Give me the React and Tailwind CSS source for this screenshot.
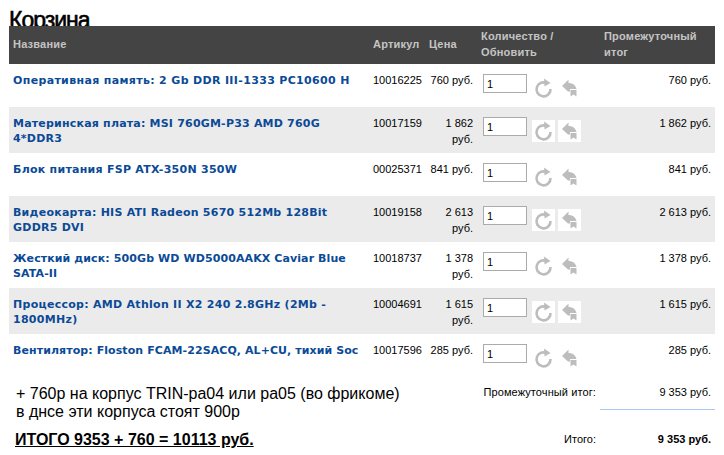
const items = [
  { name: "Оперативная память: 2 Gb DDR III-1333 PC10600 H", sku: "10016225", price: "760 руб.", h: "h-[43px]", track: "tracking-[0.34px]" },
  { name: "Материнская плата: MSI 760GM-P33 AMD 760G 4*DDR3", sku: "10017159", price: "1 862 руб.", h: "h-[46px]", track: "tracking-[0.2px]" },
  { name: "Блок питания FSP ATX-350N 350W", sku: "00025371", price: "841 руб.", h: "h-[43px]", track: "tracking-[0.26px]" },
  { name: "Видеокарта: HIS ATI Radeon 5670 512Mb 128Bit GDDR5 DVI", sku: "10019158", price: "2 613 руб.", h: "h-[46px]", track: "tracking-[0.24px]" },
  { name: "Жесткий диск: 500Gb WD WD5000AAKX Caviar Blue SATA-II", sku: "10018737", price: "1 378 руб.", h: "h-[46px]", track: "tracking-[0.1px]" },
  { name: "Процессор: AMD Athlon II X2 240 2.8GHz (2Mb - 1800MHz)", sku: "10004691", price: "1 615 руб.", h: "h-[46px]", track: "tracking-[0.28px]" },
  { name: "Вентилятор: Floston FCAM-22SACQ, AL+CU, тихий Soc", sku: "10017596", price: "285 руб.", h: "h-[43px]", track: "tracking-[0.08px]" },
];

function RefreshIcon() {
  return (
    <svg width="23" height="22" viewBox="0 0 23 22" className="block">
      <path d="M15 6.300A7 7 0 1 0 18.500 12" fill="none" stroke="#bdbdbd" strokeWidth="2.600" />
      <path d="M12 1.500l6.500 4.500-6 3.500z" fill="#bdbdbd" />
    </svg>
  );
}

function RemoveIcon() {
  return (
    <svg width="23" height="22" viewBox="0 0 23 22" className="block">
      <path d="M4 9l6.500-6.500v3.500c4 0 7 2 8 6h-6.500v2.500h-2z" fill="#bdbdbd" />
      <path d="M12.500 13h6v6.500l-3-2-3 2z" fill="#bdbdbd" />
    </svg>
  );
}

function Row({ item, striped }) {
  const btn = striped ? "bg-white" : "";
  return (
    <tr className={`${item.h} align-top ${striped ? "bg-[#ebebeb]" : "bg-white"}`}>
      <td className="pl-1 pr-1 pt-[9px]">
        <a className={`block text-[11px] leading-[15px] font-bold text-[#0b4a96] [font-family:'DejaVu_Sans',sans-serif] ${item.track}`}>
          {item.name}
        </a>
      </td>
      <td className="pl-1 pt-[8px] leading-[16px]">{item.sku}</td>
      <td className="pr-1 pt-[8px] leading-[16px] text-right">{item.price}</td>
      <td className="pl-1 pt-[10px]">
        <div className="flex items-start">
          <input
            defaultValue="1"
            className="w-[44px] h-[19px] ml-[2px] pl-[3px] bg-white border border-[#ababab] text-[11px] text-black outline-none"
          />
          <span className={`w-[23px] h-[22px] ml-[5px] mt-[3px] ${btn}`}><RefreshIcon /></span>
          <span className={`w-[23px] h-[22px] ml-[3px] mt-[3px] ${btn}`}><RemoveIcon /></span>
        </div>
      </td>
      <td className="pr-1 pt-[8px] leading-[16px] text-right">{item.price}</td>
    </tr>
  );
}

export default function App() {
  return (
    <div className="w-[724px] h-[455px] overflow-hidden bg-white text-black text-[11px] [font-family:'Liberation_Sans',Arial,sans-serif]">
      <h1 className="h-[26px] pl-[9px] pt-[7px] text-[23px] leading-[26px] font-normal tracking-[-1px] [-webkit-text-stroke:0.6px_black]">Корзина</h1>
      <div className="relative pl-[9px] pr-[9px]">
        <table className="relative w-[706px] table-fixed border-collapse">
          <colgroup>
            <col className="w-[360px]" />
            <col className="w-[56px]" />
            <col className="w-[52px]" />
            <col className="w-[123px]" />
            <col className="w-[115px]" />
          </colgroup>
          <thead>
            <tr className="h-[38px] bg-[#444444] text-[#c4c4c4] text-[11px] leading-[16px] font-bold text-left tracking-[0.2px]">
              <th className="pl-1 pb-[2px] font-bold">Название</th>
              <th className="pl-1 pb-[2px] font-bold">Артикул</th>
              <th className="pl-1 pb-[2px] font-bold">Цена</th>
              <th className="pl-1 pb-[2px] font-bold">Количество / Обновить</th>
              <th className="pl-[4px] pb-[2px] font-bold">Промежуточный итог</th>
            </tr>
          </thead>
          <tbody>
            {items.map((item, i) => (
              <Row key={item.sku} item={item} striped={i % 2 === 1} />
            ))}
          </tbody>
        </table>
      </div>
      <div className="flex pl-[9px] pr-[9px]">
        <div className="w-[462px] pl-[7px] pt-[8px] text-[16px] leading-[18px]">
          <p>+ 760р на корпус TRIN-pa04 или pa05 (во фрикоме)</p>
          <p>в днсе эти корпуса стоят 900р</p>
          <p className="mt-[10px] -ml-[1px] font-bold underline">ИТОГО 9353 + 760 = 10113 руб.</p>
        </div>
        <div className="flex-1 text-[11px]">
          <div className="flex h-[32px] pt-[8px] leading-[15px]">
            <span className="w-[125px] text-right tracking-[0.1px]">Промежуточный итог:</span>
            <span className="flex-1 pr-[4px] text-right">9 353 руб.</span>
          </div>
          <div className="ml-[129px] h-px bg-[#a8c8f8]" />
          <div className="flex pt-[22px] leading-[15px]">
            <span className="w-[125px] text-right">Итого:</span>
            <span className="flex-1 pr-[4px] text-right font-bold">9 353 руб.</span>
          </div>
        </div>
      </div>
    </div>
  );
}
